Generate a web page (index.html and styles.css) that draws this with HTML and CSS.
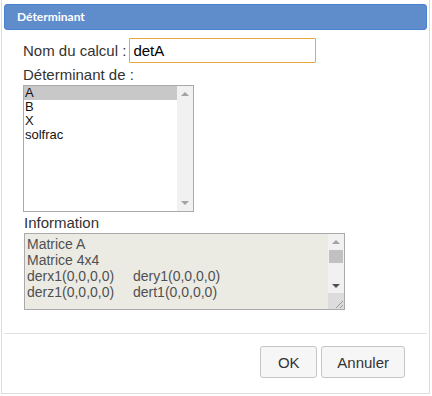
FILE: index.html
```html
<!DOCTYPE html>
<html lang="fr">
<head>
    <meta charset="UTF-8">
    <title>Déterminant</title>
    <link rel="stylesheet" href="styles.css">
</head>
<body>
    <div class="dialog">
        <!-- Title -->
        <div class="titlebar">Déterminant</div>

        <div class="dialog-body">
            <div class="row">
                <label class="label" for="calcName">Nom du calcul :</label>
                <input class="name-input" id="calcName" type="text" value="detA">
            </div>

            <div class="label">Déterminant de :</div>
            <div class="listbox">
                <ul class="list-items">
                    <li class="selected">A</li>
                    <li>B</li>
                    <li>X</li>
                    <li>solfrac</li>
                </ul>
                <div class="scrollbar">
                    <span class="arrow up"></span>
                    <span class="track"></span>
                    <span class="arrow down"></span>
                </div>
            </div>

            <div class="label info-label">Information</div>
            <div class="infobox">
                <div class="info-text">
                    <div>Matrice A</div>
                    <div>Matrice 4x4</div>
                    <div><span class="col">derx1(0,0,0,0)</span>dery1(0,0,0,0)</div>
                    <div><span class="col">derz1(0,0,0,0)</span>dert1(0,0,0,0)</div>
                </div>
                <div class="scrollbar info-scroll">
                    <span class="arrow up"></span>
                    <span class="thumb"></span>
                    <span class="track"></span>
                    <span class="arrow down dark"></span>
                    <span class="resize">
                        <svg width="12" height="12" viewBox="0 0 12 12">
                            <path d="M11 4 L4 11 M11 8 L8 11" stroke="#999" stroke-width="1" fill="none"/>
                        </svg>
                    </span>
                </div>
            </div>
        </div>

        <!-- Buttons -->
        <div class="dialog-footer">
            <button class="btn btn-ok">OK</button>
            <button class="btn">Annuler</button>
        </div>
    </div>
</body>
</html>
```

FILE: styles.css
```css
/* Base */
body, html {
    margin: 0;
    padding: 0;
    background: #fff;
    font-family: 'Liberation Sans', Arial, sans-serif;
    color: #333;
}

.dialog {
    margin: 0 1px;
    width: 429px;
    height: 394px;
    box-sizing: border-box;
    border: 1px solid #dcdcdc;
    border-top: none;
    padding: 4px 2px 0 2px;
    display: flex;
    flex-direction: column;
}

/* Title bar */
.titlebar {
    height: 24px;
    line-height: 24px;
    background: #5f8dcb;
    border: 1px solid #4b80d3;
    border-radius: 3px;
    color: #fff;
    font-family: Lato, 'Open Sans', sans-serif;
    font-weight: bold;
    font-size: 12px;
    padding-left: 12px;
}

/* Body */
.dialog-body {
    padding: 8px 0 0 19px;
}

.row {
    display: flex;
    align-items: center;
    gap: 3px;
}

.label {
    display: block;
    font-size: 15px;
    color: #333;
    line-height: 17px;
}

.name-input {
    width: 187px;
    height: 25px;
    box-sizing: border-box;
    border: 1px solid #e6a93e;
    border-radius: 1px;
    padding: 0 3px;
    font-family: 'Liberation Sans', Arial, sans-serif;
    font-size: 15px;
    color: #000;
    outline: none;
}

.row + .label {
    margin-top: 3px;
}

/* List */
.listbox {
    margin-top: 2px;
    width: 171px;
    height: 127px;
    box-sizing: border-box;
    border: 1px solid #aaa;
    display: flex;
    background: #fff;
}

.list-items {
    list-style: none;
    margin: 0;
    padding: 0;
    flex: 1;
    font-size: 13px;
    color: #111;
}

.list-items li {
    height: 14px;
    line-height: 14px;
    padding-left: 1px;
}

.list-items li.selected {
    background: #c8c8c8;
}

.scrollbar {
    width: 16px;
    background: #f1f1f1;
    display: flex;
    flex-direction: column;
    align-items: center;
}

.scrollbar .track {
    flex: 1;
}

.arrow {
    width: 0;
    height: 0;
    margin: 6px 0;
    border-left: 4px solid transparent;
    border-right: 4px solid transparent;
}

.arrow.up {
    border-bottom: 4px solid #a3a3a3;
}

.arrow.down {
    border-top: 4px solid #a3a3a3;
}

.arrow.down.dark {
    border-top-color: #505050;
}

/* Information */
.info-label {
    margin-top: 2px;
    padding-left: 1px;
}

.infobox {
    margin-top: 2px;
    margin-left: 1px;
    width: 321px;
    height: 77px;
    box-sizing: border-box;
    border: 1px solid #aaa;
    background: #ebebe4;
    display: flex;
}

.info-text {
    flex: 1;
    padding: 2px 0 0 2px;
    font-size: 14px;
    line-height: 16px;
    color: #505050;
    white-space: nowrap;
}

.info-text .col {
    display: inline-block;
    width: 106px;
}

.info-scroll .thumb {
    width: 14px;
    height: 13px;
    background: #c1c1c1;
}

.info-scroll .arrow.down {
    margin-bottom: 5px;
}

.resize {
    width: 16px;
    height: 16px;
    background: #dcdcdc;
    display: flex;
    align-items: flex-end;
    justify-content: flex-end;
}

/* Footer */
.dialog-footer {
    margin-top: 23px;
    border-top: 1px solid #e2e2e2;
    padding: 12px 22px 0 0;
    display: flex;
    justify-content: flex-end;
    gap: 4px;
}

.btn {
    height: 32px;
    padding: 0 15px;
    border: 1px solid #c5c5c5;
    border-radius: 3px;
    background: #f6f6f6;
    font-family: 'Liberation Sans', Arial, sans-serif;
    font-size: 15px;
    color: #333;
}

.btn-ok {
    width: 57px;
}
```
